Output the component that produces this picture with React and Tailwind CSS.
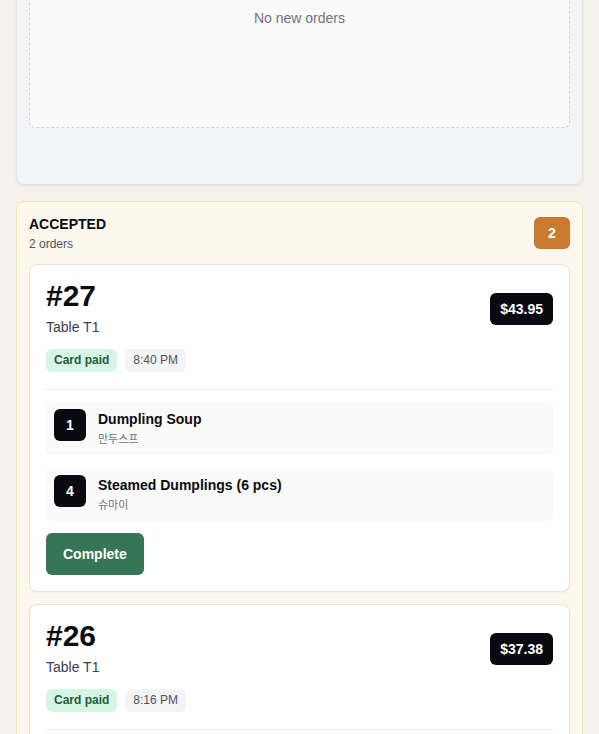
import React from 'react'

const orders = [
  {
    id: 27,
    table: 'T1',
    total: '$43.95',
    time: '8:40 PM',
    items: [
      { qty: 1, name: 'Dumpling Soup', ko: '만두스프' },
      { qty: 4, name: 'Steamed Dumplings (6 pcs)', ko: '슈마이' },
    ],
  },
  {
    id: 26,
    table: 'T1',
    total: '$37.38',
    time: '8:16 PM',
    items: [
      { qty: 2, name: 'Kimchi Fried Rice', ko: '김치볶음밥' },
      { qty: 1, name: 'Dumpling Soup', ko: '만두스프' },
    ],
  },
]

function OrderCard({ order }) {
  return (
    <div className="rounded-lg border border-[#e7e4dc] bg-white p-4 shadow-[0_1px_2px_rgba(0,0,0,0.04)]">
      <div className="flex items-center justify-between">
        <div>
          <div className="text-[30px] font-bold leading-none text-[#0b0b12]">#{order.id}</div>
          <div className="mt-1.5 text-sm leading-5 text-gray-700">Table {order.table}</div>
        </div>
        <div className="rounded-md bg-[#090912] px-2.5 py-1.5 text-sm font-bold leading-5 text-white">
          {order.total}
        </div>
      </div>
      <div className="mt-3 flex items-center gap-2">
        <span className="rounded-md bg-[#d6f5e3] px-2 py-1 text-xs font-bold leading-[15px] text-[#1f5c3c]">
          Card paid
        </span>
        <span className="rounded-md bg-gray-100 px-2 py-1 text-xs leading-[15px] text-gray-600">{order.time}</span>
      </div>
      <div className="mt-[17px] border-t border-[#f0efec] pt-3">
        <div className="space-y-[13px]">
          {order.items.map((item) => (
            <div key={item.name} className="flex items-start gap-3 rounded-md bg-[#fafafa] px-2 py-[7px]">
              <div className="flex h-8 w-8 shrink-0 items-center justify-center rounded-md bg-[#090912] text-sm font-bold text-white">
                {item.qty}
              </div>
              <div>
                <div className="text-sm font-bold leading-5 text-[#0b0b12]">{item.name}</div>
                <div className="mt-px text-[11px] leading-[18px] text-gray-500">{item.ko}</div>
              </div>
            </div>
          ))}
        </div>
        <button className="mt-3 h-[42px] rounded-md bg-[#367657] px-[17px] text-sm font-bold text-white">
          Complete
        </button>
      </div>
    </div>
  )
}

export default function App() {
  return (
    <div
      className="min-h-screen overflow-hidden bg-[#f5f2ec] px-4"
      style={{ fontFamily: '"Liberation Sans", Arial, "Noto Sans CJK KR", sans-serif' }}
    >
      <div className="-mt-[45px] flex flex-col gap-4">
        <section className="rounded-lg border border-[#e3e4e6] bg-[#f3f4f6] px-3 pb-[56px] pt-3 shadow-[0_1px_3px_rgba(0,0,0,0.06)]">
          <div className="flex h-[160px] justify-center rounded-md border border-dashed border-[#cfd1d5] bg-[#fafafa] pt-[39px] text-sm leading-5 text-gray-500">
            No new orders
          </div>
        </section>

        <section className="rounded-lg border border-[#f3e6ad] bg-[#fdf8eb] p-3">
          <div className="mb-3 flex items-start justify-between">
            <div>
              <h2 className="text-sm font-bold leading-5 text-[#0b0b12]">ACCEPTED</h2>
              <p className="mt-0.5 text-xs leading-4 text-gray-600">2 orders</p>
            </div>
            <span className="mt-[3px] flex h-8 min-w-9 items-center justify-center rounded-md bg-[#c97b30] px-3 text-sm font-bold text-white">
              2
            </span>
          </div>
          <div className="space-y-3">
            {orders.map((o) => (
              <OrderCard key={o.id} order={o} />
            ))}
          </div>
        </section>
      </div>
    </div>
  )
}
